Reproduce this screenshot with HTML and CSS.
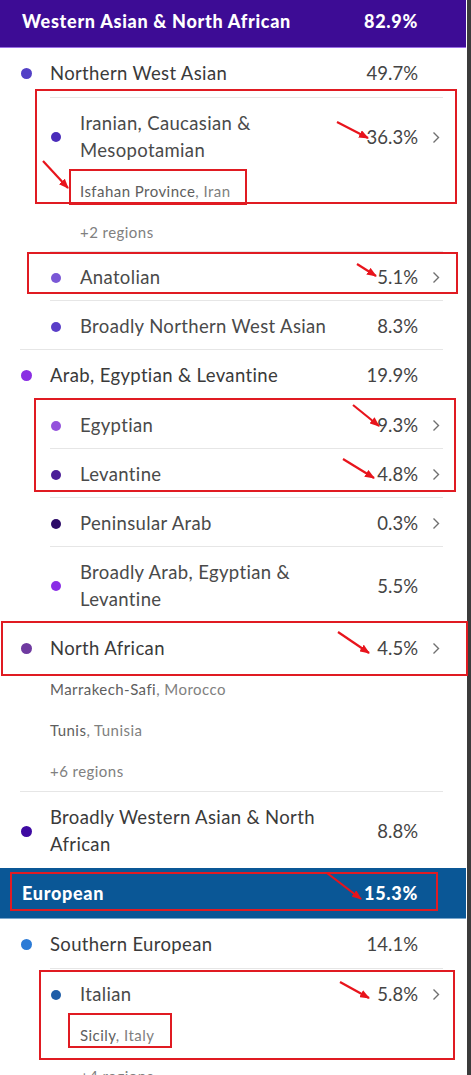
FILE: index.html
```html
<!DOCTYPE html>
<html lang="en">
<head>
<meta charset="utf-8">
<title>Ancestry composition</title>
<link rel="stylesheet" href="styles.css">
</head>
<body>
<div class="page">
  <main class="panel">
    <div class="cat cat-purple cat-cropped"><span>Western Asian &amp; North African</span><span>82.9%</span></div>

    <section class="group">
      <div class="row">
        <span class="dot c-nwa"></span><span class="name">Northern West Asian</span><span class="pct">49.7%</span><span></span>
      </div>
      <div class="subs">
        <div class="row sub">
          <span class="dot c-iran"></span><span class="name">Iranian, Caucasian &amp;<br>Mesopotamian</span><span class="pct">36.3%</span>
          <span class="chev"><svg width="8" height="13" viewBox="0 0 8 13"><polyline points="1.5,1.5 6.5,6.5 1.5,11.5" fill="none" stroke="#707070" stroke-width="1.4"/></svg></span>
          <ul class="regions">
            <li><span class="rg">Isfahan Province</span><span class="ct">, Iran</span></li>
            <li class="more">+2 regions</li>
          </ul>
        </div>
        <div class="row sub">
          <span class="dot c-anat"></span><span class="name">Anatolian</span><span class="pct">5.1%</span>
          <span class="chev"><svg width="8" height="13" viewBox="0 0 8 13"><polyline points="1.5,1.5 6.5,6.5 1.5,11.5" fill="none" stroke="#707070" stroke-width="1.4"/></svg></span>
        </div>
        <div class="row sub">
          <span class="dot c-bnwa"></span><span class="name">Broadly Northern West Asian</span><span class="pct">8.3%</span><span></span>
        </div>
      </div>
    </section>

    <section class="group">
      <div class="row">
        <span class="dot c-arab"></span><span class="name">Arab, Egyptian &amp; Levantine</span><span class="pct">19.9%</span><span></span>
      </div>
      <div class="subs">
        <div class="row sub">
          <span class="dot c-egy"></span><span class="name">Egyptian</span><span class="pct">9.3%</span>
          <span class="chev"><svg width="8" height="13" viewBox="0 0 8 13"><polyline points="1.5,1.5 6.5,6.5 1.5,11.5" fill="none" stroke="#707070" stroke-width="1.4"/></svg></span>
        </div>
        <div class="row sub">
          <span class="dot c-lev"></span><span class="name">Levantine</span><span class="pct">4.8%</span>
          <span class="chev"><svg width="8" height="13" viewBox="0 0 8 13"><polyline points="1.5,1.5 6.5,6.5 1.5,11.5" fill="none" stroke="#707070" stroke-width="1.4"/></svg></span>
        </div>
        <div class="row sub">
          <span class="dot c-pen"></span><span class="name">Peninsular Arab</span><span class="pct">0.3%</span>
          <span class="chev"><svg width="8" height="13" viewBox="0 0 8 13"><polyline points="1.5,1.5 6.5,6.5 1.5,11.5" fill="none" stroke="#707070" stroke-width="1.4"/></svg></span>
        </div>
        <div class="row sub">
          <span class="dot c-barab"></span><span class="name">Broadly Arab, Egyptian &amp;<br>Levantine</span><span class="pct">5.5%</span><span></span>
        </div>
      </div>
    </section>

    <section class="group">
      <div class="row">
        <span class="dot c-na"></span><span class="name">North African</span><span class="pct">4.5%</span>
        <span class="chev"><svg width="8" height="13" viewBox="0 0 8 13"><polyline points="1.5,1.5 6.5,6.5 1.5,11.5" fill="none" stroke="#707070" stroke-width="1.4"/></svg></span>
        <ul class="regions">
          <li><span class="rg">Marrakech-Safi</span><span class="ct">, Morocco</span></li>
          <li><span class="rg">Tunis</span><span class="ct">, Tunisia</span></li>
          <li class="more">+6 regions</li>
        </ul>
      </div>
    </section>

    <section class="group group-last">
      <div class="row">
        <span class="dot c-bwana"></span><span class="name">Broadly Western Asian &amp; North<br>African</span><span class="pct">8.8%</span><span></span>
      </div>
    </section>

    <div class="cat cat-blue"><span>European</span><span>15.3%</span></div>

    <section class="group">
      <div class="row">
        <span class="dot c-se"></span><span class="name">Southern European</span><span class="pct">14.1%</span><span></span>
      </div>
      <div class="subs">
        <div class="row sub">
          <span class="dot c-ita"></span><span class="name">Italian</span><span class="pct">5.8%</span>
          <span class="chev"><svg width="8" height="13" viewBox="0 0 8 13"><polyline points="1.5,1.5 6.5,6.5 1.5,11.5" fill="none" stroke="#707070" stroke-width="1.4"/></svg></span>
          <ul class="regions">
            <li><span class="rg">Sicily</span><span class="ct">, Italy</span></li>
            <li class="more">+4 regions</li>
          </ul>
        </div>
      </div>
    </section>
  </main>
  <div class="edge"></div>

  <svg class="marks" width="471" height="1075" viewBox="0 0 471 1075">
    <defs>
      <marker id="ah" markerWidth="10" markerHeight="8" refX="9" refY="4" orient="auto" markerUnits="userSpaceOnUse">
        <polygon points="0,0 10,4 0,8" fill="#e8141c"/>
      </marker>
    </defs>
    <g fill="none" stroke="#e01b22" stroke-width="2">
      <rect x="36" y="90" width="420" height="113"/>
      <rect x="70" y="170" width="176" height="34"/>
      <rect x="28" y="253" width="429" height="40"/>
      <rect x="35" y="399" width="420" height="92"/>
      <rect x="2" y="622" width="465" height="53"/>
      <rect x="11" y="873" width="426" height="37"/>
      <rect x="40" y="971" width="414" height="88"/>
      <rect x="69" y="1014" width="102" height="33"/>
    </g>
    <g stroke="#e8141c" stroke-width="2.2" marker-end="url(#ah)">
      <line x1="337" y1="122" x2="368" y2="138"/>
      <line x1="43" y1="161" x2="68" y2="188"/>
      <line x1="357" y1="264" x2="376" y2="276"/>
      <line x1="353" y1="405" x2="379" y2="426"/>
      <line x1="343" y1="459" x2="374" y2="478"/>
      <line x1="338" y1="632" x2="369" y2="653"/>
      <line x1="327" y1="873" x2="361" y2="899"/>
      <line x1="340" y1="982" x2="369" y2="998"/>
    </g>
  </svg>
</div>
</body>
</html>
```

FILE: styles.css
```css
* { box-sizing: border-box; }

html, body {
  margin: 0;
  padding: 0;
  background: #ffffff;
}

body {
  font-family: "Lato", "Noto Sans", sans-serif;
  color: #3a3a3a;
  overflow: hidden;
}

.page {
  position: relative;
  display: flex;
  width: 471px;
  height: 1075px;
  overflow: hidden;
}

.panel {
  width: 467px;
  flex: none;
  background: #fff;
  padding-right: 1px;
}

.edge {
  flex: 1;
  background: #3b3b3b;
}

.cat {
  display: flex;
  justify-content: space-between;
  align-items: center;
  padding: 0 48px 0 22px;
  color: #fff;
  font-weight: 900;
  font-size: 18px;
  letter-spacing: 0.7px;
}

.cat-purple {
  background: #3d0c95;
  height: 48px;
  padding-bottom: 5px;
  border-bottom: 1px solid #9a6fe6;
}

.cat-blue {
  background: #0a5796;
  height: 51px;
  border-bottom: 1px solid #7aa6cc;
}

.group {
  margin: 0 23px 0 20px;
  border-bottom: 1px solid #e6e6e6;
}

.group-last {
  border-bottom: none;
}

.subs {
  margin-left: 30px;
}

.row {
  display: grid;
  grid-template-columns: 30px 1fr auto 25px;
  align-items: center;
  padding: 12px 0 10px;
}

.row.sub {
  border-top: 1px solid #e6e6e6;
  padding-bottom: 9px;
}

.dot {
  width: 11px;
  height: 11px;
  border-radius: 50%;
  margin-left: 1px;
}

.sub .dot {
  width: 10px;
  height: 10px;
}

.name {
  font-size: 18.5px;
  line-height: 27px;
  letter-spacing: 0.35px;
  color: #3a3a3a;
}

.sub .name {
  color: #4a4a4a;
}

.pct {
  font-size: 18.5px;
  line-height: 27px;
  color: #444;
  text-align: right;
}

.chev {
  display: flex;
  justify-content: flex-end;
  padding-right: 3px;
}

.chev svg { display: block; }

.regions {
  grid-column: 2 / -1;
  list-style: none;
  margin: 17px 0 0;
  padding: 0;
  display: flex;
  flex-direction: column;
  gap: 21px;
  font-size: 15px;
  line-height: 20px;
  letter-spacing: 0.45px;
}

.rg { color: #5e5e5e; }
.ct { color: #808080; }
.more { color: #808080; }

.c-nwa   { background: #5340c6; }
.c-iran  { background: #4a2cba; }
.c-anat  { background: #7a57d6; }
.c-bnwa  { background: #5a3ec8; }
.c-arab  { background: #8a2ee3; }
.c-egy   { background: #9452dc; }
.c-lev   { background: #4b1e98; }
.c-pen   { background: #2c0b68; }
.c-barab { background: #8a2ee6; }
.c-na    { background: #6f3aa0; }
.c-bwana { background: #3e0aa2; }
.c-se    { background: #2c7bd6; }
.c-ita   { background: #1f5ea8; }

.marks {
  position: absolute;
  top: 0;
  left: 0;
  pointer-events: none;
}
```
